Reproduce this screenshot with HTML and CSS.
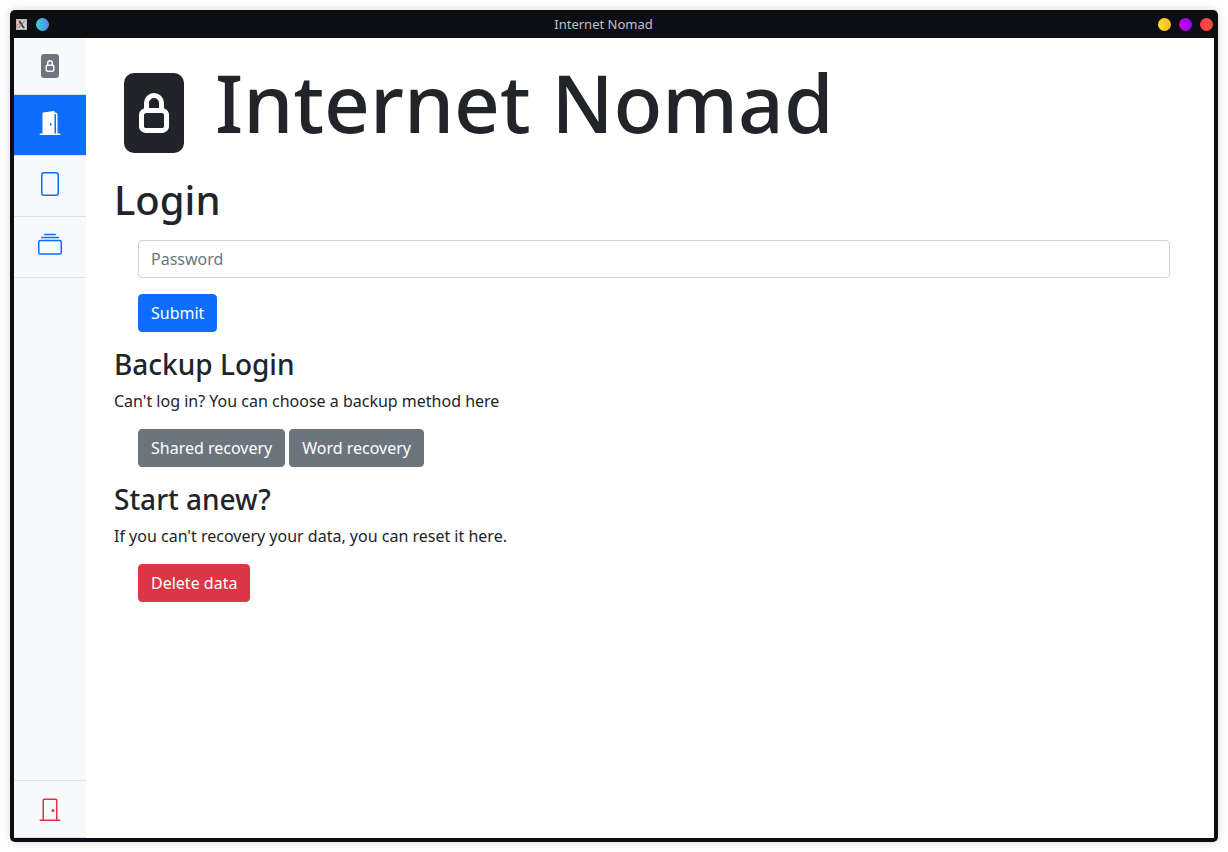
FILE: index.html
```html
<!DOCTYPE html>
<html lang="en">
<head>
<meta charset="utf-8">
<meta name="viewport" content="width=device-width, initial-scale=1">
<title>Internet Nomad</title>
<link rel="stylesheet" href="styles.css">
</head>
<body>
<div class="window">
  <header class="titlebar">
    <div class="titlebar-group">
      <svg class="app-icon" viewBox="0 0 12 12" aria-hidden="true">
        <rect width="12" height="12" fill="#b9b8b8"/>
        <rect x="1" y="1" width="10" height="10" fill="#cfcccb"/>
        <path d="M1.500 9.500a5 3 0 0 1 3-4.500" fill="none" stroke="#e0906f" stroke-width="1.500"/>
        <path d="M2.500 2h2.200l5 8H7.500z" fill="#34363c"/>
        <path d="M9.500 2 2.500 10" stroke="#6a6b70" stroke-width="1"/>
      </svg>
      <button class="dot dot-blue" type="button" aria-label="Pin window"></button>
    </div>
    <div class="titlebar-text">Internet Nomad</div>
    <div class="titlebar-group titlebar-controls">
      <button class="dot dot-yellow" type="button" aria-label="Minimize"></button>
      <button class="dot dot-purple" type="button" aria-label="Maximize"></button>
      <button class="dot dot-red" type="button" aria-label="Close"></button>
    </div>
  </header>
  <div class="content">
    <nav class="sidebar" aria-label="Main">
      <a class="side-brand" href="#" aria-label="Home">
        <svg class="icon" viewBox="0 0 16 16"><path d="M7 6a1 1 0 0 1 2 0v1H7zM6 8.300c0-.042.02-.107.105-.175A.64.64 0 0 1 6.500 8h3a.64.64 0 0 1 .395.125c.085.068.105.133.105.175v2.400c0 .042-.02.107-.105.175A.64.64 0 0 1 9.500 11h-3a.64.64 0 0 1-.395-.125C6.020 10.807 6 10.742 6 10.700z"/><path d="M12 0H4a2 2 0 0 0-2 2v12a2 2 0 0 0 2 2h8a2 2 0 0 0 2-2V2a2 2 0 0 0-2-2m-2 6v1.076c.54.166 1 .597 1 1.224v2.400c0 .816-.781 1.300-1.500 1.300h-3c-.719 0-1.500-.484-1.500-1.300V8.300c0-.627.46-1.058 1-1.224V6a2 2 0 1 1 4 0"/></svg>
      </a>
      <a class="side-link active" href="#" aria-label="Login" aria-current="page">
        <svg class="icon" viewBox="0 0 16 16"><path d="M1.500 15a.5.5 0 0 0 0 1h13a.5.5 0 0 0 0-1H13V2.500A1.500 1.500 0 0 0 11.500 1H11V.5a.5.5 0 0 0-.57-.495l-7 1A.5.5 0 0 0 3 1.500V15zM11 2h.5a.5.5 0 0 1 .5.5V15h-1zm-2.500 8c-.276 0-.5-.448-.5-1s.224-1 .5-1 .5.448.5 1-.224 1-.5 1"/></svg>
      </a>
      <a class="side-link" href="#" aria-label="File">
        <svg class="icon" viewBox="0 0 16 16"><path d="M4 0a2 2 0 0 0-2 2v12a2 2 0 0 0 2 2h8a2 2 0 0 0 2-2V2a2 2 0 0 0-2-2zm0 1h8a1 1 0 0 1 1 1v12a1 1 0 0 1-1 1H4a1 1 0 0 1-1-1V2a1 1 0 0 1 1-1"/></svg>
      </a>
      <a class="side-link" href="#" aria-label="Collection">
        <svg class="icon" viewBox="0 0 16 16"><path d="M2.500 3.500a.5.5 0 0 1 0-1h11a.5.5 0 0 1 0 1zm2-2a.5.5 0 0 1 0-1h7a.5.5 0 0 1 0 1zM0 13a1.500 1.500 0 0 0 1.500 1.500h13A1.500 1.500 0 0 0 16 13V6a1.500 1.500 0 0 0-1.500-1.500h-13A1.500 1.500 0 0 0 0 6zm1.500.5A.5.5 0 0 1 1 13V6a.5.5 0 0 1 .5-.5h13a.5.5 0 0 1 .5.5v7a.5.5 0 0 1-.5.5z"/></svg>
      </a>
      <a class="side-exit" href="#" aria-label="Exit">
        <svg class="icon" viewBox="0 0 16 16"><path d="M3 2a1 1 0 0 1 1-1h8a1 1 0 0 1 1 1v13h1.500a.5.5 0 0 1 0 1h-13a.5.5 0 0 1 0-1H3zm1 13h8V2H4z"/><path d="M9 9a1 1 0 1 0 2 0 1 1 0 0 0-2 0"/></svg>
      </a>
    </nav>
    <main class="main">
      <h1 class="hero">
        <svg class="hero-icon" viewBox="0 0 16 16" aria-hidden="true"><path d="M7 6a1 1 0 0 1 2 0v1H7zM6 8.300c0-.042.02-.107.105-.175A.64.64 0 0 1 6.500 8h3a.64.64 0 0 1 .395.125c.085.068.105.133.105.175v2.400c0 .042-.02.107-.105.175A.64.64 0 0 1 9.500 11h-3a.64.64 0 0 1-.395-.125C6.020 10.807 6 10.742 6 10.700z"/><path d="M12 0H4a2 2 0 0 0-2 2v12a2 2 0 0 0 2 2h8a2 2 0 0 0 2-2V2a2 2 0 0 0-2-2m-2 6v1.076c.54.166 1 .597 1 1.224v2.400c0 .816-.781 1.300-1.500 1.300h-3c-.719 0-1.500-.484-1.500-1.300V8.300c0-.627.46-1.058 1-1.224V6a2 2 0 1 1 4 0"/></svg>
        <span>Internet Nomad</span>
      </h1>
      <h2 class="page-title">Login</h2>
      <form class="login-form">
        <input class="field" type="password" placeholder="Password" aria-label="Password">
        <button class="btn btn-primary" type="submit">Submit</button>
      </form>
      <h3 class="section-title">Backup Login</h3>
      <p class="text">Can't log in? You can choose a backup method here</p>
      <div class="actions">
        <button class="btn btn-secondary" type="button">Shared recovery</button>
        <button class="btn btn-secondary" type="button">Word recovery</button>
      </div>
      <h3 class="section-title">Start anew?</h3>
      <p class="text">If you can't recovery your data, you can reset it here.</p>
      <div class="actions">
        <button class="btn btn-danger" type="button">Delete data</button>
      </div>
    </main>
  </div>
</div>
</body>
</html>
```
FILE: styles.css
```css
*, *::before, *::after { box-sizing: border-box; }

body {
  display: flex;
  height: 100vh;
  margin: 0;
  padding: 10px;
  background: #fff;
  color: #212529;
  font: 400 16px/24px "Noto Sans", "Liberation Sans", sans-serif;
}

.window {
  display: flex;
  flex: 1;
  flex-direction: column;
  padding: 0 4px 4px;
  border-radius: 5px;
  background: #0c0e13;
  box-shadow: 0 0 10px rgba(0, 0, 0, 0.16);
}

.titlebar {
  display: grid;
  grid-template-columns: 1fr auto 1fr;
  align-items: center;
  height: 28px;
  padding: 0 1px 0 2px;
}

.titlebar-group { display: flex; align-items: center; gap: 9px; }
.titlebar-controls { justify-content: flex-end; gap: 8px; }
.titlebar-text { padding-right: 22px; color: #c0c1c4; font-size: 13px; line-height: 18px; }

.app-icon { width: 11px; height: 11px; }

.dot { width: 13px; height: 13px; padding: 0; border: 0; border-radius: 50%; }
.dot-blue { background: linear-gradient(90deg, #36d1dc, #5b86e5); }
.dot-yellow { background: linear-gradient(90deg, #f8e71c, #ffb02e); }
.dot-purple { background: linear-gradient(90deg, #c800dc, #9d00ff); }
.dot-red { background: linear-gradient(90deg, #ff3d5a, #ff4b2b); }

.content { display: flex; flex: 1; min-height: 0; background: #fff; }

.sidebar {
  display: flex;
  flex: none;
  flex-direction: column;
  width: 72px;
  background: #f8f9fa;
}

.sidebar a { display: flex; justify-content: center; border-bottom: 1px solid #dee2e6; }
.sidebar .side-brand { padding: 16px 0; color: #6c757d; }
.side-link { height: 61px; padding-top: 16px; color: #0d6efd; }
.side-link.active { background: #0d6efd; background-clip: padding-box; color: #fff; }
.sidebar .side-exit {
  margin-top: auto;
  padding: 16px 0;
  border-top: 1px solid #dee2e6;
  color: #dc3545;
}

.icon { width: 24px; height: 24px; fill: currentColor; }

.main { flex: 1; min-width: 0; padding: 16px 20px 16px 28px; overflow: auto; }

h1, h2, h3, p { margin: 0; font-weight: 500; }

.hero { display: flex; gap: 21px; margin-bottom: 23px; font-size: 80px; line-height: 96px; }
.hero-icon { flex: none; width: 80px; height: 80px; margin-top: 19px; fill: currentColor; }

.page-title { margin-bottom: 16px; font-size: 40px; line-height: 48px; }

.login-form {
  display: flex;
  flex-direction: column;
  align-items: flex-start;
  gap: 16px;
  padding: 0 24px;
  margin-bottom: 16px;
}

.field {
  width: 100%;
  height: 38px;
  padding: 6px 12px;
  border: 1px solid #ced4da;
  border-radius: 4px;
  background: #fff;
  color: #212529;
  font: inherit;
}
.field::placeholder { color: #6c757d; opacity: 1; }

.section-title { margin-bottom: 8px; font-size: 28px; line-height: 33px; }

.text { margin-bottom: 16px; font-weight: 400; }

.actions { display: flex; flex-wrap: wrap; gap: 4px; padding: 0 24px; margin-bottom: 16px; }

.btn {
  padding: 6px 12px;
  border: 1px solid transparent;
  border-radius: 4px;
  color: #fff;
  font: inherit;
  cursor: pointer;
}
.btn-primary { border-color: #0d6efd; background: #0d6efd; }
.btn-secondary { border-color: #6c757d; background: #6c757d; }
.btn-danger { border-color: #dc3545; background: #dc3545; }
```
